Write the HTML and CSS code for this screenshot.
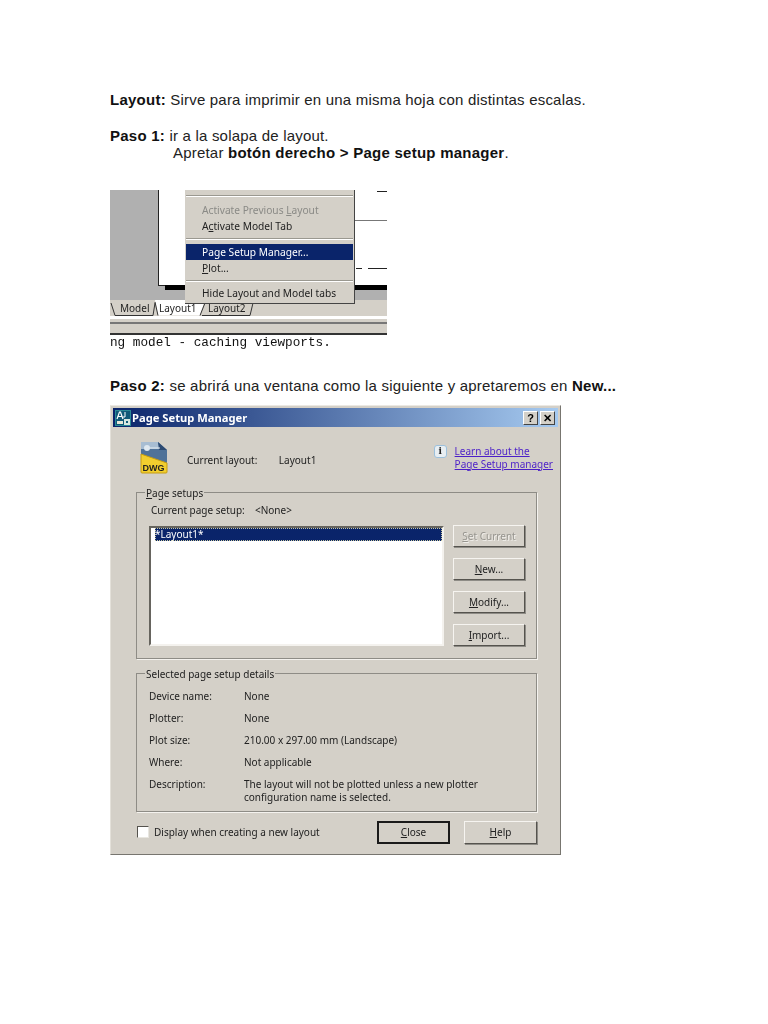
FILE: index.html
```html
<!DOCTYPE html>
<html lang="es">
<head>
    <meta charset="UTF-8">
    <title>Layout</title>
    <link rel="stylesheet" href="styles.css">
</head>
<body>
    <div class="page">
        <p class="line-first"><strong>Layout:</strong> Sirve para imprimir en una misma hoja con distintas escalas.</p>
        <p class="line-step">
            <strong>Paso 1:</strong> ir a la solapa de layout.<br>
            <span class="indent">Apretar <strong>botón derecho &gt; Page setup manager</strong>.</span>
        </p>

        <!-- captura del menu -->
        <div class="shot">
            <div class="canvas">
                <div class="paper"></div>
                <div class="paper-shadow"></div>
                <div class="mark mark-a"></div>
                <div class="mark mark-b"></div>
                <div class="mark mark-c"></div>
                <div class="mark mark-d"></div>
            </div>
            <div class="tabs">
                <svg class="tab-lines" width="150" height="16" viewBox="0 0 150 16">
                    <path d="M1 3 L5 15.5 H43 L45 3" fill="none" stroke="#333"/>
                    <path d="M45 0 L48 15.5 H90 L95 0 Z" fill="#fff"/>
                    <path d="M45 2 L48 15.5 M90 15.5 L95 3" fill="none" stroke="#333"/>
                    <path d="M92 15.5 H140 L143 3" fill="none" stroke="#333"/>
                </svg>
                <span class="tab tab-model">Model</span>
                <span class="tab tab-one">Layout1</span>
                <span class="tab">Layout2</span>
            </div>
            <div class="status"></div>
            <div class="cmd">ng model - caching viewports.</div>

            <div class="menu">
                <div class="menu-sep menu-sep-top"></div>
                <div class="menu-item off">Activate Previous <u>L</u>ayout</div>
                <div class="menu-item">A<u>c</u>tivate Model Tab</div>
                <div class="menu-sep"></div>
                <div class="menu-item on">Page Setup Manager...</div>
                <div class="menu-item"><u>P</u>lot...</div>
                <div class="menu-sep"></div>
                <div class="menu-item menu-last">Hide Layout and Model tabs</div>
            </div>
        </div>

        <p class="line-step2"><strong>Paso 2:</strong> se abrirá una ventana como la siguiente y apretaremos en <strong>New...</strong></p>

        <!-- ventana Page Setup Manager -->
        <div class="dialog">
            <div class="titlebar">
                <svg class="app-icon" width="16" height="16" viewBox="0 0 16 16">
                    <rect width="16" height="16" fill="#2a8a96"/>
                    <rect x="1" y="1" width="14" height="14" fill="#0f5a78"/>
                    <path d="M2 9 L4.5 2 H5.5 L8 9 M3.2 6.5 H6.8" fill="none" stroke="#fff" stroke-width="1.2"/>
                    <path d="M10 2 V7 H8" fill="none" stroke="#fff"/>
                    <rect x="2" y="11" width="6" height="3" fill="#e8e8d8"/>
                    <rect x="9" y="9" width="6" height="6" fill="#d8e8e0"/>
                    <rect x="11" y="11" width="2" height="2" fill="#0f5a78"/>
                </svg>
                <span class="title">Page Setup Manager</span>
                <span class="caption-btn">?</span>
                <span class="caption-btn">✕</span>
            </div>

            <div class="head">
                <svg class="dwg-icon" width="32" height="34" viewBox="0 0 32 34">
                    <path d="M3 1 H20 L29 9 V24 H3 Z" fill="#4f7299"/>
                    <path d="M3 1 H20 L22 8 H3 Z" fill="#a8bdd2"/>
                    <path d="M20 1 L29 9 H21 Z" fill="#2c4a72"/>
                    <circle cx="9" cy="7" r="3" fill="#dfe8f0"/>
                    <path d="M12 7 H22" stroke="#e4ecf2"/>
                    <path d="M3 13 L29 22 V31 Q29 32 28 32 H4 Q3 32 3 31 Z" fill="#f2ce2e" stroke="#c59c12"/>
                    <text x="4.5" y="30" class="dwg-text">DWG</text>
                </svg>
                <span class="cur-label">Current layout:</span>
                <span class="cur-value">Layout1</span>
                <span class="info">i</span>
                <a class="learn" href="#">Learn about the<br>Page Setup manager</a>
            </div>

            <fieldset class="group group-setups">
                <legend><u>P</u>age setups</legend>
                <div class="cur-setup"><span>Current page setup:</span><span>&lt;None&gt;</span></div>
                <div class="setup-row">
                    <div class="list">
                        <div class="list-sel">*Layout1*</div>
                    </div>
                    <div class="side-btns">
                        <span class="btn btn-off"><u>S</u>et Current</span>
                        <span class="btn"><u>N</u>ew...</span>
                        <span class="btn"><u>M</u>odify...</span>
                        <span class="btn"><u>I</u>mport...</span>
                    </div>
                </div>
            </fieldset>

            <fieldset class="group group-details">
                <legend>Selected page setup details</legend>
                <div class="details">
                    <span>Device name:</span><span>None</span>
                    <span>Plotter:</span><span>None</span>
                    <span>Plot size:</span><span>210.00 x 297.00 mm (Landscape)</span>
                    <span>Where:</span><span>Not applicable</span>
                    <span>Description:</span><span>The layout will not be plotted unless a new plotter<br>configuration name is selected.</span>
                </div>
            </fieldset>

            <div class="foot">
                <span class="check"></span>
                <span class="check-label">Display when creating a new layout</span>
                <span class="btn btn-main"><u>C</u>lose</span>
                <span class="btn btn-help"><u>H</u>elp</span>
            </div>
        </div>
    </div>
</body>
</html>
```

FILE: styles.css
```css
html, body {
    margin: 0;
    background: #fff;
}
.page {
    height: 1024px;
    box-sizing: border-box;
    padding: 91px 0 0 110px;
    font-family: "Liberation Sans", Arial, sans-serif;
    font-size: 15px;
    letter-spacing: 0.2px;
    line-height: 17px;
    color: #222;
    overflow: hidden;
}
.page p {
    margin: 0;
}
.page strong {
    color: #111;
    letter-spacing: 0.25px;
}
.line-step {
    margin-top: 19px !important;
}
.line-step2 {
    margin-top: 27px !important;
}
.indent {
    margin-left: 63px;
}

/* captura */
.shot {
    position: relative;
    width: 277px;
    height: 160px;
    margin-top: 29px;
    letter-spacing: 0;
    filter: blur(0.35px);
}
.canvas {
    position: relative;
    height: 110px;
    background: #b0b0b0;
    overflow: hidden;
}
.paper {
    position: absolute;
    left: 48px;
    top: 0;
    width: 229px;
    height: 96px;
    background: #fff;
    border-left: 1px solid #222;
    border-bottom: 1px solid #222;
    box-sizing: border-box;
}
.paper-shadow {
    position: absolute;
    left: 55px;
    top: 95px;
    width: 222px;
    height: 5px;
    background: #000;
}
.mark {
    position: absolute;
    height: 1px;
    background: #222;
}
.mark-a { left: 267px; top: 1px; width: 10px; }
.mark-b { left: 245px; top: 30px; width: 32px; background: #777; }
.mark-c { left: 258px; top: 78px; width: 19px; }
.mark-d { left: 246px; top: 78px; width: 6px; }
.tabs {
    position: relative;
    display: flex;
    height: 16px;
    background: #d4d0c8;
    font-family: "Noto Sans", sans-serif;
    font-size: 10px;
    line-height: 16px;
    color: #222;
    border-bottom: 3px solid #fff;
}
.tab-lines {
    position: absolute;
    left: 0;
    top: 0;
}
.tab {
    position: relative;
    white-space: nowrap;
}
.tab-model {
    width: 39px;
    margin-left: 10px;
}
.tab-one {
    width: 49px;
}
.status {
    height: 16px;
    background: linear-gradient(#d4d0c8 0 3px, #777 3px 5px, #d4d0c8 5px 14px, #333 14px 16px);
}
.cmd {
    margin-top: 1px;
    font-family: "Liberation Mono", monospace;
    font-size: 12.7px;
    line-height: 14px;
    color: #111;
    white-space: nowrap;
}
.menu {
    position: absolute;
    left: 75px;
    top: 0;
    width: 170px;
    height: 114px;
    box-sizing: border-box;
    padding: 5px 1px 0;
    background: #d4d0c8;
    border-right: 1px solid #444;
    border-bottom: 1px solid #444;
    font-family: "Noto Sans", sans-serif;
    font-size: 10.2px;
    color: #222;
}
.menu-item {
    height: 16px;
    line-height: 16px;
    padding-left: 16px;
    white-space: nowrap;
}
.menu-item.off {
    color: #8a8a86;
}
.menu-item.on {
    background: #0a246a;
    color: #fff;
}
.menu-last {
    line-height: 14px;
}
.menu-sep {
    height: 2px;
    margin: 4px 0;
    background: #9a9890;
    border-bottom: 1px solid #fff;
    box-sizing: border-box;
}
.menu-sep-top {
    margin: 0 0 5px;
}

/* ventana */
.dialog {
    width: 451px;
    height: 450px;
    margin-top: 11px;
    box-sizing: border-box;
    padding: 2px;
    background: #d4d0c8;
    border: 1px solid;
    border-color: #ece9e3 #77756f #77756f #e4e1da;
    font-family: "Noto Sans", sans-serif;
    font-size: 10px;
    letter-spacing: 0;
    line-height: 13px;
    color: #222;
    filter: blur(0.3px);
}
.titlebar {
    display: flex;
    align-items: center;
    height: 19px;
    padding: 0 3px 0 2px;
    background: linear-gradient(90deg, #0a246a, #a6caf0);
}
.app-icon {
    flex: none;
}
.title {
    flex: 1;
    margin-left: 1px;
    color: #fff;
    font-weight: bold;
    font-size: 11.2px;
    white-space: nowrap;
}
.caption-btn {
    width: 15px;
    height: 14px;
    margin-left: 2px;
    box-sizing: border-box;
    background: #d4d0c8;
    border: 1px solid;
    border-color: #fff #444 #444 #fff;
    color: #000;
    font-family: "Liberation Sans", sans-serif;
    font-weight: bold;
    font-size: 11px;
    line-height: 12px;
    text-align: center;
}
.head {
    display: flex;
    align-items: center;
    height: 58px;
    padding-left: 25px;
    padding-right: 5px;
}
.dwg-icon {
    flex: none;
    margin-top: 4px;
}
.dwg-text {
    font-family: "Liberation Sans", sans-serif;
    font-weight: bold;
    font-size: 9px;
    fill: #222;
}
.cur-label {
    margin-left: 17px;
    margin-top: 9px;
    width: 92px;
}
.cur-value {
    margin-top: 9px;
    width: 155px;
}
.info {
    width: 13px;
    height: 13px;
    margin-top: -10px;
    box-sizing: border-box;
    background: #e8eef2;
    border: 1px solid #9cc0dc;
    border-radius: 3px;
    font-family: "DejaVu Serif", serif;
    font-size: 9px;
    line-height: 11px;
    text-align: center;
    font-weight: bold;
}
.learn {
    margin-left: 8px;
    margin-top: 3px;
    color: #4b1fc8;
    white-space: nowrap;
}
.group {
    margin: 0 0 0 23px;
    padding: 0;
    width: 401px;
    box-sizing: border-box;
    border: 1px solid #8e8c86;
    box-shadow: 1px 1px 0 #f4f2ee;
    min-inline-size: 0;
}
.group legend {
    margin-left: 8px;
    padding: 2px 1px 0;
    line-height: 13px;
}
.group-setups {
    height: 174px;
}
.group-details {
    height: 146px;
    margin-top: 7px;
}
.cur-setup {
    display: flex;
    margin: 4px 0 0 14px;
    height: 14px;
}
.cur-setup span:first-child {
    width: 104px;
}
.setup-row {
    display: flex;
    align-items: flex-start;
    gap: 9px;
    margin: 7px 0 0 12px;
}
.list {
    width: 295px;
    height: 120px;
    margin-top: 1px;
    box-sizing: border-box;
    padding-left: 4px;
    background: #fff;
    border: 2px solid;
    border-color: #66645e #f4f2ee #f4f2ee #66645e;
}
.list-sel {
    height: 13px;
    background: #0a246a;
    color: #fff;
    outline: 1px dotted #c8c8a0;
    outline-offset: -1px;
}
.side-btns {
    display: flex;
    flex-direction: column;
    gap: 11px;
    width: 72px;
}
.btn {
    display: block;
    height: 22px;
    box-sizing: border-box;
    background: #d4d0c8;
    border: 1px solid;
    border-color: #f6f4f0 #55534e #55534e #f6f4f0;
    box-shadow: 1px 1px 0 #8e8c86;
    text-align: center;
    line-height: 20px;
}
.btn-off {
    color: #97958f;
    text-shadow: 1px 1px 0 #f0eeea;
}
.details {
    display: grid;
    grid-template-columns: 95px 1fr;
    row-gap: 9px;
    margin: 9px 0 0 12px;
}
.foot {
    display: flex;
    align-items: center;
    height: 24px;
    margin: 8px 0 0 24px;
}
.check {
    width: 12px;
    height: 12px;
    box-sizing: border-box;
    background: #fff;
    border: 1px solid;
    border-color: #55534e #e8e6e0 #e8e6e0 #55534e;
}
.check-label {
    width: 223px;
    margin-left: 5px;
}
.btn-main {
    width: 73px;
    height: 23px;
    border: 2px solid #1a1a1a;
    box-shadow: none;
    line-height: 18px;
}
.btn-help {
    width: 73px;
    height: 23px;
    margin-left: 14px;
}
```
